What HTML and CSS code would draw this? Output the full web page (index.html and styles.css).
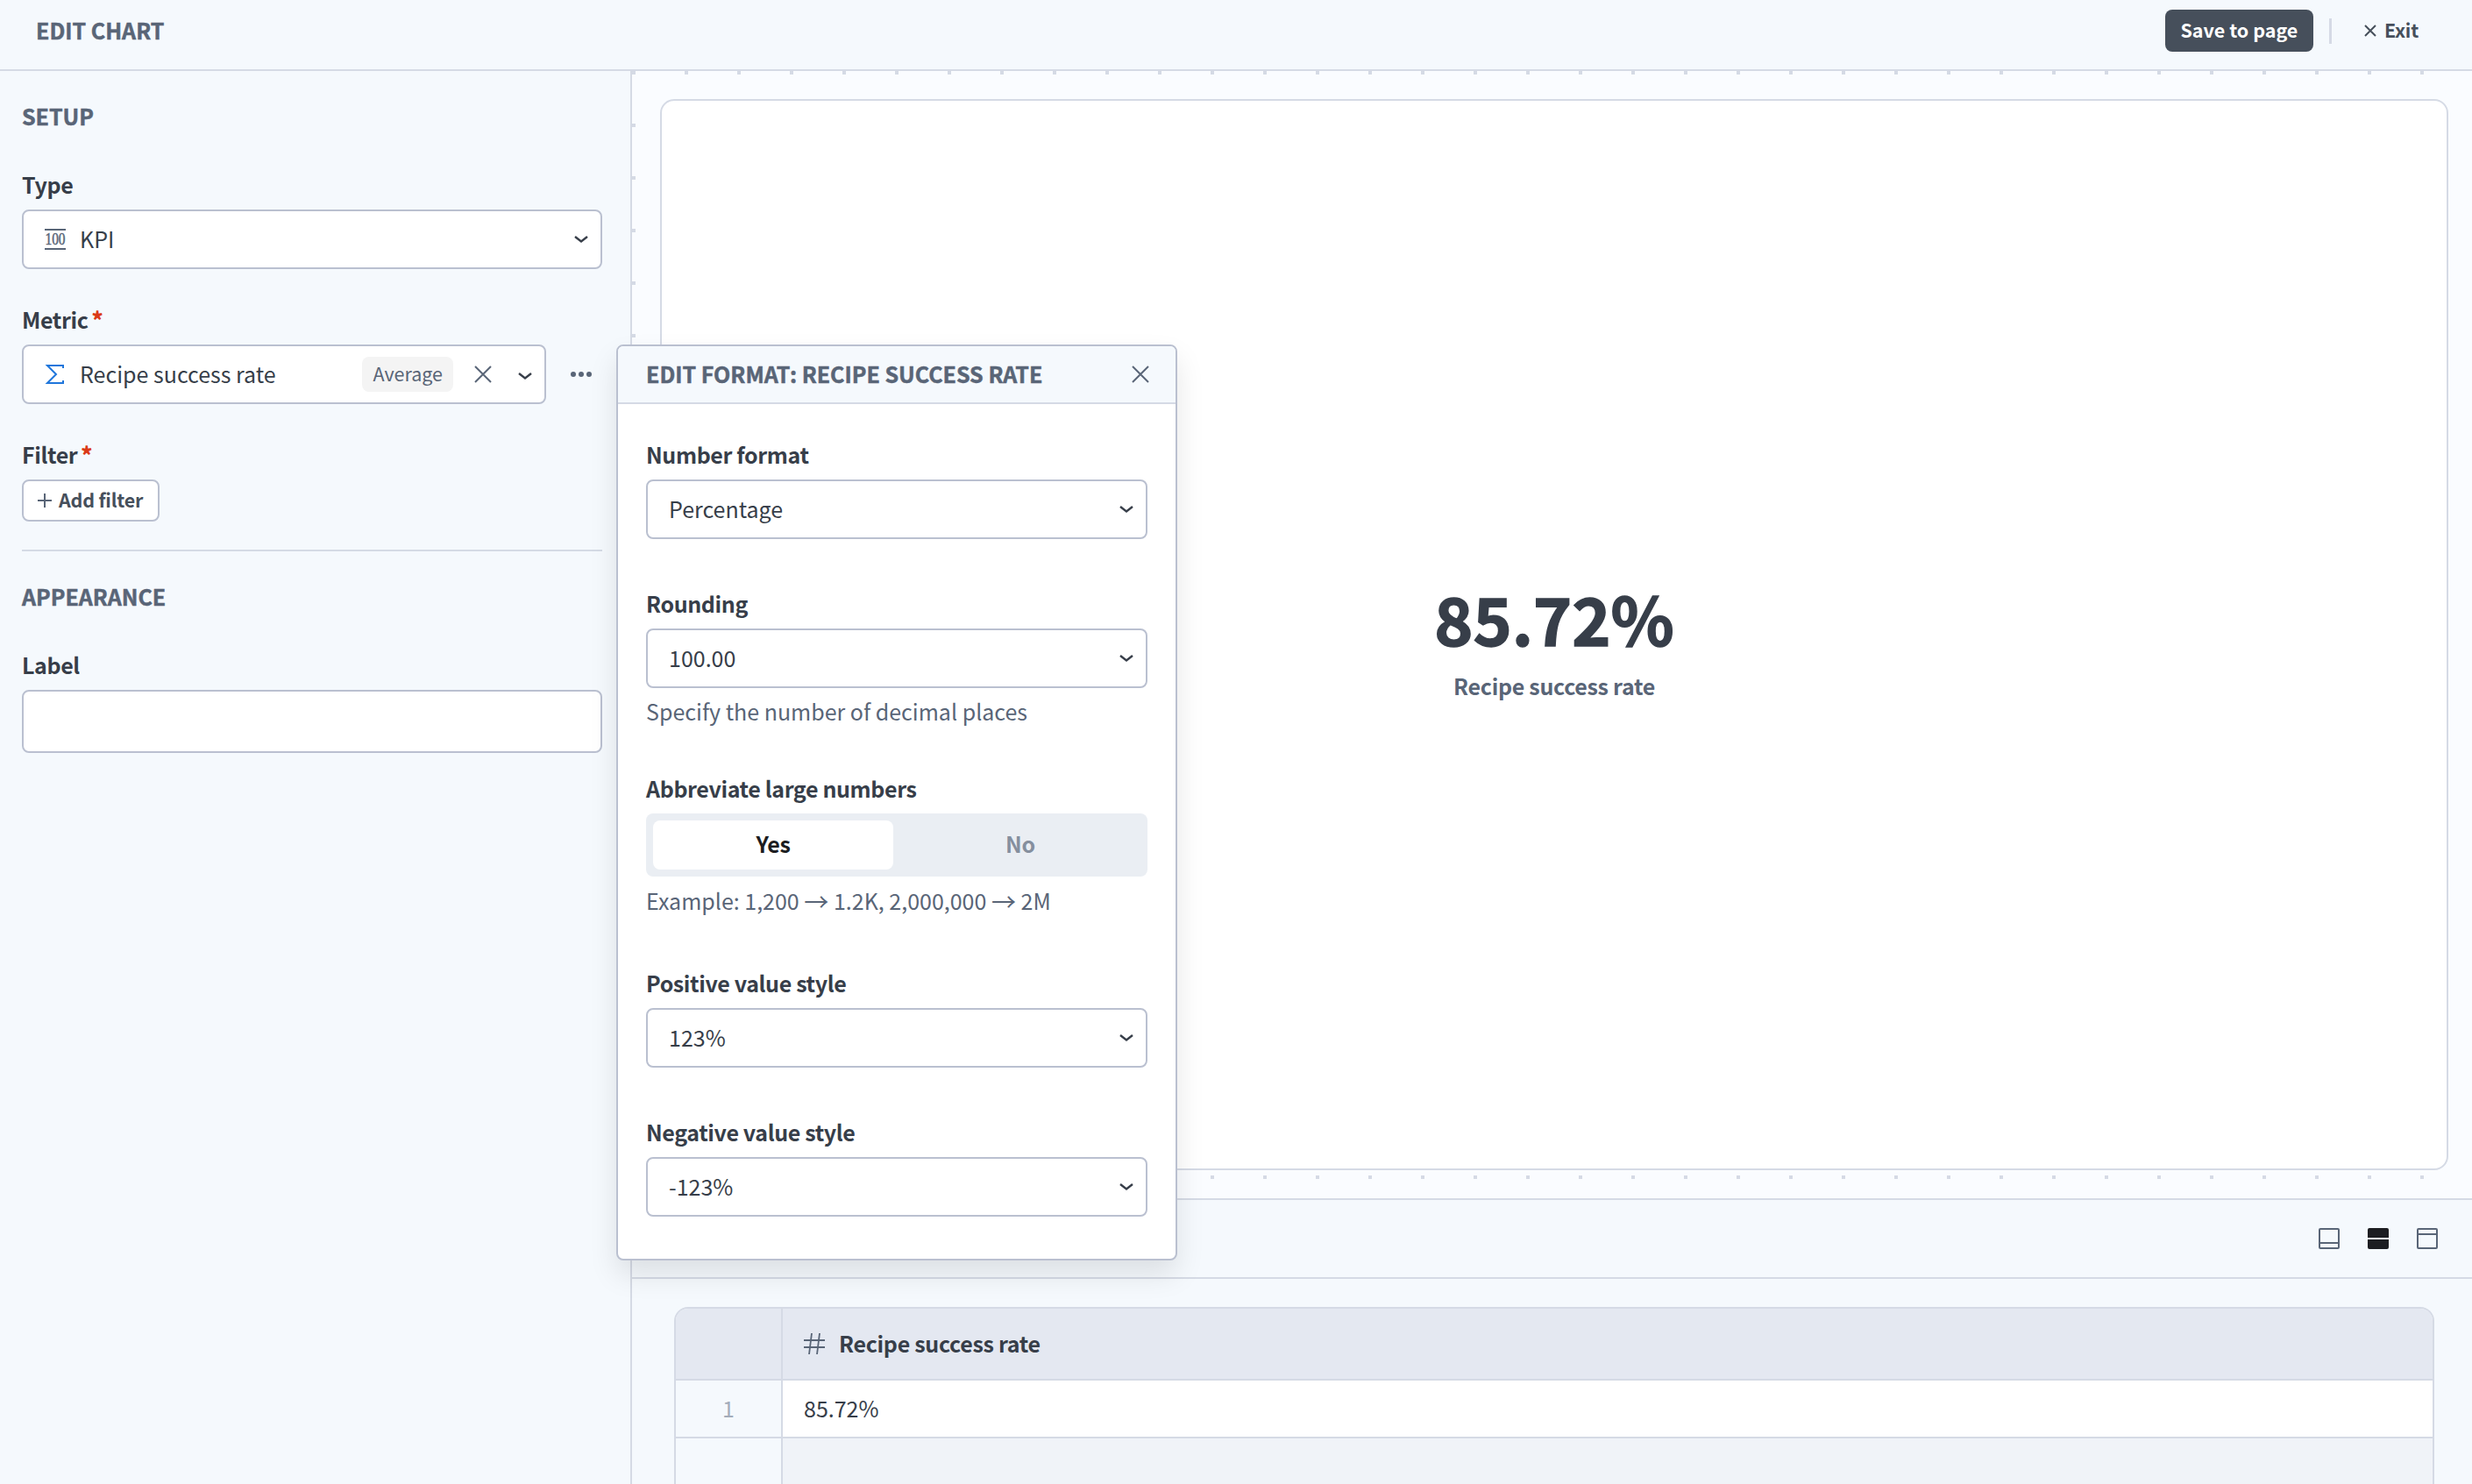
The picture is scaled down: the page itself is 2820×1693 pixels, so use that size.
FILE: index.html
```
<!DOCTYPE html>
<html lang="en">
<head>
<meta charset="utf-8">
<title>Edit chart</title>
<link rel="stylesheet" href="styles.css">
</head>

<body>

<div class="topbar">
<h1 class="heading">EDIT CHART</h1>
<div class="topbarActions">
<button class="saveButton">Save to page</button>
<span class="separator"></span>
<button class="exitButton">
<svg width="14" height="14" viewBox="0 0 14 14"><path d="M1 1L13 13M13 1L1 13"/></svg>
<span>Exit</span>
</button>
</div>
</div>

<div class="workspace">

<div class="sidebar">
<h2 class="heading">SETUP</h2>

<div class="field">
<label class="label">Type</label>
<div class="select">
<svg class="kpiIcon" width="24" height="24" viewBox="0 0 24 24"><path d="M0 1H24M0 23H24"/><text x="0.5" y="18" textLength="23" lengthAdjust="spacingAndGlyphs">100</text></svg>
<span class="value">KPI</span>
<svg class="chevron" width="18" height="10" viewBox="0 0 18 10"><path d="M2 2L9 7.4L16 2"/></svg>
</div>
</div>

<div class="field">
<label class="label">Metric<b class="required">*</b></label>
<div class="metricRow">
<div class="select metricSelect">
<svg class="sigma" width="24" height="24" viewBox="0 0 24 24"><path d="M21 5V2H3L13 12L3 22H21V19"/></svg>
<span class="value">Recipe success rate</span>
<span class="badge">Average</span>
<svg class="cross" width="20" height="20" viewBox="0 0 20 20"><path d="M1 1L19 19M19 1L1 19"/></svg>
<svg class="chevron" width="18" height="10" viewBox="0 0 18 10"><path d="M2 2L9 7.4L16 2"/></svg>
</div>
<svg class="more" width="24" height="6" viewBox="0 0 24 6"><circle cx="3" cy="3" r="3"/><circle cx="12" cy="3" r="3"/><circle cx="21" cy="3" r="3"/></svg>
</div>
</div>

<div class="field">
<label class="label">Filter<b class="required">*</b></label>
<button class="addButton">
<svg width="16" height="16" viewBox="0 0 16 16"><path d="M8 0V16M0 8H16"/></svg>
<span>Add filter</span>
</button>
</div>

<hr class="divider">

<h2 class="heading">APPEARANCE</h2>
<div class="field">
<label class="label">Label</label>
<input class="textInput" type="text">
</div>
</div>

<div class="main">
<div class="canvas">
<div class="chartCard">
<div class="kpiValue">85.72%</div>
<div class="kpiLabel">Recipe success rate</div>
</div>
</div>

<div class="layoutBar">
<svg class="layoutIcon" width="24" height="24" viewBox="0 0 24 24"><rect x="1" y="1" width="22" height="22" rx="1"/><path d="M1 17H23"/></svg>
<svg class="layoutIcon active" width="24" height="24" viewBox="0 0 24 24"><path d="M2 0H22Q24 0 24 2V11H0V2Q0 0 2 0ZM0 13H24V22Q24 24 22 24H2Q0 24 0 22Z"/></svg>
<svg class="layoutIcon" width="24" height="24" viewBox="0 0 24 24"><rect x="1" y="1" width="22" height="22" rx="1"/><path d="M1 7H23"/></svg>
</div>

<div class="dataPanel">
<div class="dataTable">
<div class="cell headCell"></div>
<div class="cell headCell">
<svg class="hash" width="24" height="24" viewBox="0 0 24 24"><path d="M0 8H24M0 16H24M9 0L6 24M18 0L15 24"/></svg>
<span>Recipe success rate</span>
</div>
<div class="cell indexCell">1</div>
<div class="cell valueCell">85.72%</div>
<div class="cell indexCell"></div>
<div class="cell emptyCell"></div>
</div>
</div>
</div>

</div>

<div class="popup">
<div class="popupHeader">
<h2 class="heading">EDIT FORMAT: RECIPE SUCCESS RATE</h2>
<svg class="cross" width="20" height="20" viewBox="0 0 20 20"><path d="M1 1L19 19M19 1L1 19"/></svg>
</div>
<div class="popupBody">
<div class="field">
<label class="label">Number format</label>
<div class="select">
<span class="value">Percentage</span>
<svg class="chevron" width="18" height="10" viewBox="0 0 18 10"><path d="M2 2L9 7.4L16 2"/></svg>
</div>
</div>
<div class="field">
<label class="label">Rounding</label>
<div class="select">
<span class="value">100.00</span>
<svg class="chevron" width="18" height="10" viewBox="0 0 18 10"><path d="M2 2L9 7.4L16 2"/></svg>
</div>
<div class="hint">Specify the number of decimal places</div>
</div>
<div class="field">
<label class="label">Abbreviate large numbers</label>
<div class="toggle">
<div class="option selected">Yes</div>
<div class="option">No</div>
</div>
<div class="hint toggleHint">Example: 1,200 <span class="arrow">→</span> 1.2K, 2,000,000 <span class="arrow">→</span> 2M</div>
</div>
<div class="field">
<label class="label">Positive value style</label>
<div class="select">
<span class="value">123%</span>
<svg class="chevron" width="18" height="10" viewBox="0 0 18 10"><path d="M2 2L9 7.4L16 2"/></svg>
</div>
</div>
<div class="field">
<label class="label">Negative value style</label>
<div class="select">
<span class="value">-123%</span>
<svg class="chevron" width="18" height="10" viewBox="0 0 18 10"><path d="M2 2L9 7.4L16 2"/></svg>
</div>
</div>
</div>
</div>

</body>
</html>
```
FILE: styles.css
```
* {
    box-sizing: border-box;
}
body {
    margin: 0;
    height: 1693px;
    overflow: hidden;
    display: flex;
    flex-direction: column;
    position: relative;
    font: 25px/40px "Noto Sans CJK SC", "Noto Sans", sans-serif;
    color: #373e49;
    background: #f5f9fd;
}
svg {
    display: block;
    flex: none;
    fill: none;
    stroke: #596577;
    stroke-width: 2;
}
button {
    display: flex;
    align-items: center;
    font: bold 21.5px/44px "Noto Sans CJK SC", "Noto Sans", sans-serif;
    letter-spacing: -0.2px;
    color: #464f5b;
    border: 0;
    background: none;
    padding: 0;
}
.heading {
    margin: 0;
    font-size: 25px;
    font-weight: bold;
    line-height: 40px;
    color: #596577;
    -webkit-text-stroke: 0.5px #596577;
}

/* Top bar */
.topbar {
    flex: none;
    display: flex;
    justify-content: space-between;
    height: 81px;
    padding: 11px 61px 20px 41px;
    border-bottom: 2px solid #d5dae5;
}
.topbar .heading {
    padding-top: 3px;
}
.topbarActions {
    display: flex;
    align-items: center;
    height: 48px;
}
.saveButton {
    width: 169px;
    height: 48px;
    padding-bottom: 3px;
    justify-content: center;
    border-radius: 8px;
    background: #464f5b;
    color: #fff;
    letter-spacing: 0;
}
.separator {
    width: 3px;
    height: 29px;
    margin: 0 37px 0 18px;
    background: #d5dae5;
}
.exitButton {
    gap: 9px;
}
.exitButton svg {
    stroke: #464f5b;
}
.exitButton span {
    margin-top: -3px;
}

.workspace {
    flex: 1;
    display: flex;
    min-height: 0;
}

/* Settings */
.sidebar {
    flex: none;
    width: 721px;
    padding: 31px 32px 0 25px;
    border-right: 2px solid #d5dae5;
}
.sidebar .field {
    margin-top: 37px;
}
.sidebar .heading + .field {
    margin-top: 38px;
}
.label {
    display: block;
    height: 40px;
    margin-bottom: 9px;
    font-weight: bold;
    letter-spacing: -0.37px;
}
.required {
    margin-left: 4px;
    color: #db3a17;
}
.select {
    display: flex;
    align-items: center;
    height: 68px;
    padding: 0 13px 0 24px;
    border: 2px solid #bac0d0;
    border-radius: 8px;
    background: #fff;
}
.value {
    flex: 1;
    margin-top: -3px;
}
.chevron {
    stroke: #373e49;
    stroke-width: 2.4;
}
.kpiIcon {
    margin-right: 16px;
    overflow: visible;
}
.kpiIcon text {
    font: 18px "Liberation Serif", serif;
    fill: #596577;
    stroke: #596577;
    stroke-width: 0.5;
}
.sigma {
    margin-right: 16px;
    stroke: #1f76db;
}
.metricRow {
    display: flex;
    align-items: center;
    gap: 28px;
}
.metricSelect {
    width: 598px;
}
.badge {
    height: 40px;
    padding: 0 12px;
    margin-right: 24px;
    border-radius: 8px;
    background: #f4f4f4;
    font-size: 21.5px;
    line-height: 37px;
    color: #596577;
}
.metricSelect .chevron {
    margin: 4px 0 0 29px;
}
.more {
    fill: #596577;
    stroke: none;
}
.addButton {
    width: 157px;
    height: 48px;
    gap: 8px;
    padding-left: 16px;
    border: 2px solid #bac0d0;
    border-radius: 8px;
    background: #fff;
}
.addButton span {
    margin-top: -3px;
}
.divider {
    height: 2px;
    margin: 32px 0 31px;
    border: 0;
    background: #d5dae5;
}
.textInput {
    display: block;
    width: 100%;
    height: 72px;
    border: 2px solid #bac0d0;
    border-radius: 8px;
    background: #fff;
}

/* Chart preview */
.main {
    flex: 1;
    display: flex;
    flex-direction: column;
    min-width: 0;
}
.canvas {
    flex: none;
    height: 1286px;
    padding: 32px 27px 32px 32px;
    background: linear-gradient(90deg, transparent 4px, #fafcff 4px) 0 0 / 60px 60px,
        linear-gradient(#d5dae5 4px, #fafcff 4px) 0 0 / 60px 60px;
}
.chartCard {
    height: 1222px;
    display: flex;
    flex-direction: column;
    align-items: center;
    justify-content: center;
    padding-top: 11px;
    border: 2px solid #d5dae5;
    border-radius: 16px;
    background: #fff;
}
.kpiValue {
    font-size: 75px;
    font-weight: bold;
    line-height: 96px;
    margin-bottom: 9px;
    -webkit-text-stroke: 1.5px #373e49;
}
.kpiLabel {
    font-weight: bold;
    letter-spacing: -0.3px;
    color: #596577;
}

/* Data */
.layoutBar {
    flex: none;
    display: flex;
    justify-content: flex-end;
    gap: 32px;
    height: 92px;
    padding: 32px 39px 0 0;
    border-top: 2px solid #d5dae5;
    border-bottom: 2px solid #d5dae5;
}
.layoutIcon.active {
    fill: #1c1d21;
    stroke: none;
}
.dataPanel {
    flex: 1;
    display: flex;
    padding: 32px 43px 0 48px;
}
.dataTable {
    flex: 1;
    display: grid;
    grid-template-columns: 124px 1fr;
    grid-template-rows: 82px 66px 1fr;
    border: 2px solid #d5dae5;
    border-bottom: 0;
    border-radius: 16px 16px 0 0;
    overflow: hidden;
}
.cell {
    display: flex;
    align-items: center;
    padding: 0 0 3px 24px;
    border-bottom: 2px solid #d5dae5;
}
.headCell {
    background: #e4e8f1;
    font-weight: bold;
    letter-spacing: -0.3px;
}
.cell:nth-child(odd) {
    width: 122px;
    border-right: 2px solid #d5dae5;
}
.dataTable {
    grid-template-columns: 122px 1fr;
}
.indexCell {
    justify-content: center;
    padding-left: 0;
    color: #a4acba;
}
.valueCell {
    background: #fff;
}
.indexCell:nth-last-child(2),
.emptyCell {
    border-bottom: 0;
}
.emptyCell {
    background: #f0f3f8;
}
.hash {
    margin: 3px 16px 0 0;
    stroke-width: 1.8;
}

/* Format popup */
.popup {
    position: absolute;
    left: 703px;
    top: 393px;
    width: 640px;
    height: 1045px;
    border: 2px solid #bac0d0;
    border-radius: 8px;
    background: #fff;
    box-shadow: 0 16px 32px rgba(0, 0, 0, 0.1);
    overflow: hidden;
}
.popupHeader {
    display: flex;
    align-items: center;
    justify-content: space-between;
    height: 66px;
    padding: 0 30px 0 32px;
    border-bottom: 2px solid #d5dae5;
    background: #f5f9fd;
}
.popupHeader .heading {
    margin-top: -3px;
}
.popupBody {
    display: flex;
    flex-direction: column;
    gap: 53px;
    padding: 37px 32px 0;
}
.hint {
    margin: 6px 0 -5px;
    color: #596577;
}
.arrow {
    font-size: 28px;
    line-height: 1px;
    vertical-align: -2px;
}
.toggle {
    display: flex;
    height: 72px;
    padding: 8px 0 8px 8px;
    border-radius: 8px;
    background: #eaeef3;
}
.option {
    flex: 1;
    border-radius: 8px;
    text-align: center;
    font-weight: bold;
    letter-spacing: -0.3px;
    line-height: 53px;
    color: #858f9e;
}
.option.selected {
    flex: none;
    width: 274px;
    background: #fff;
    color: #1c1d21;
}
.toggleHint {
    margin: 7px 0 1px;
}
```
